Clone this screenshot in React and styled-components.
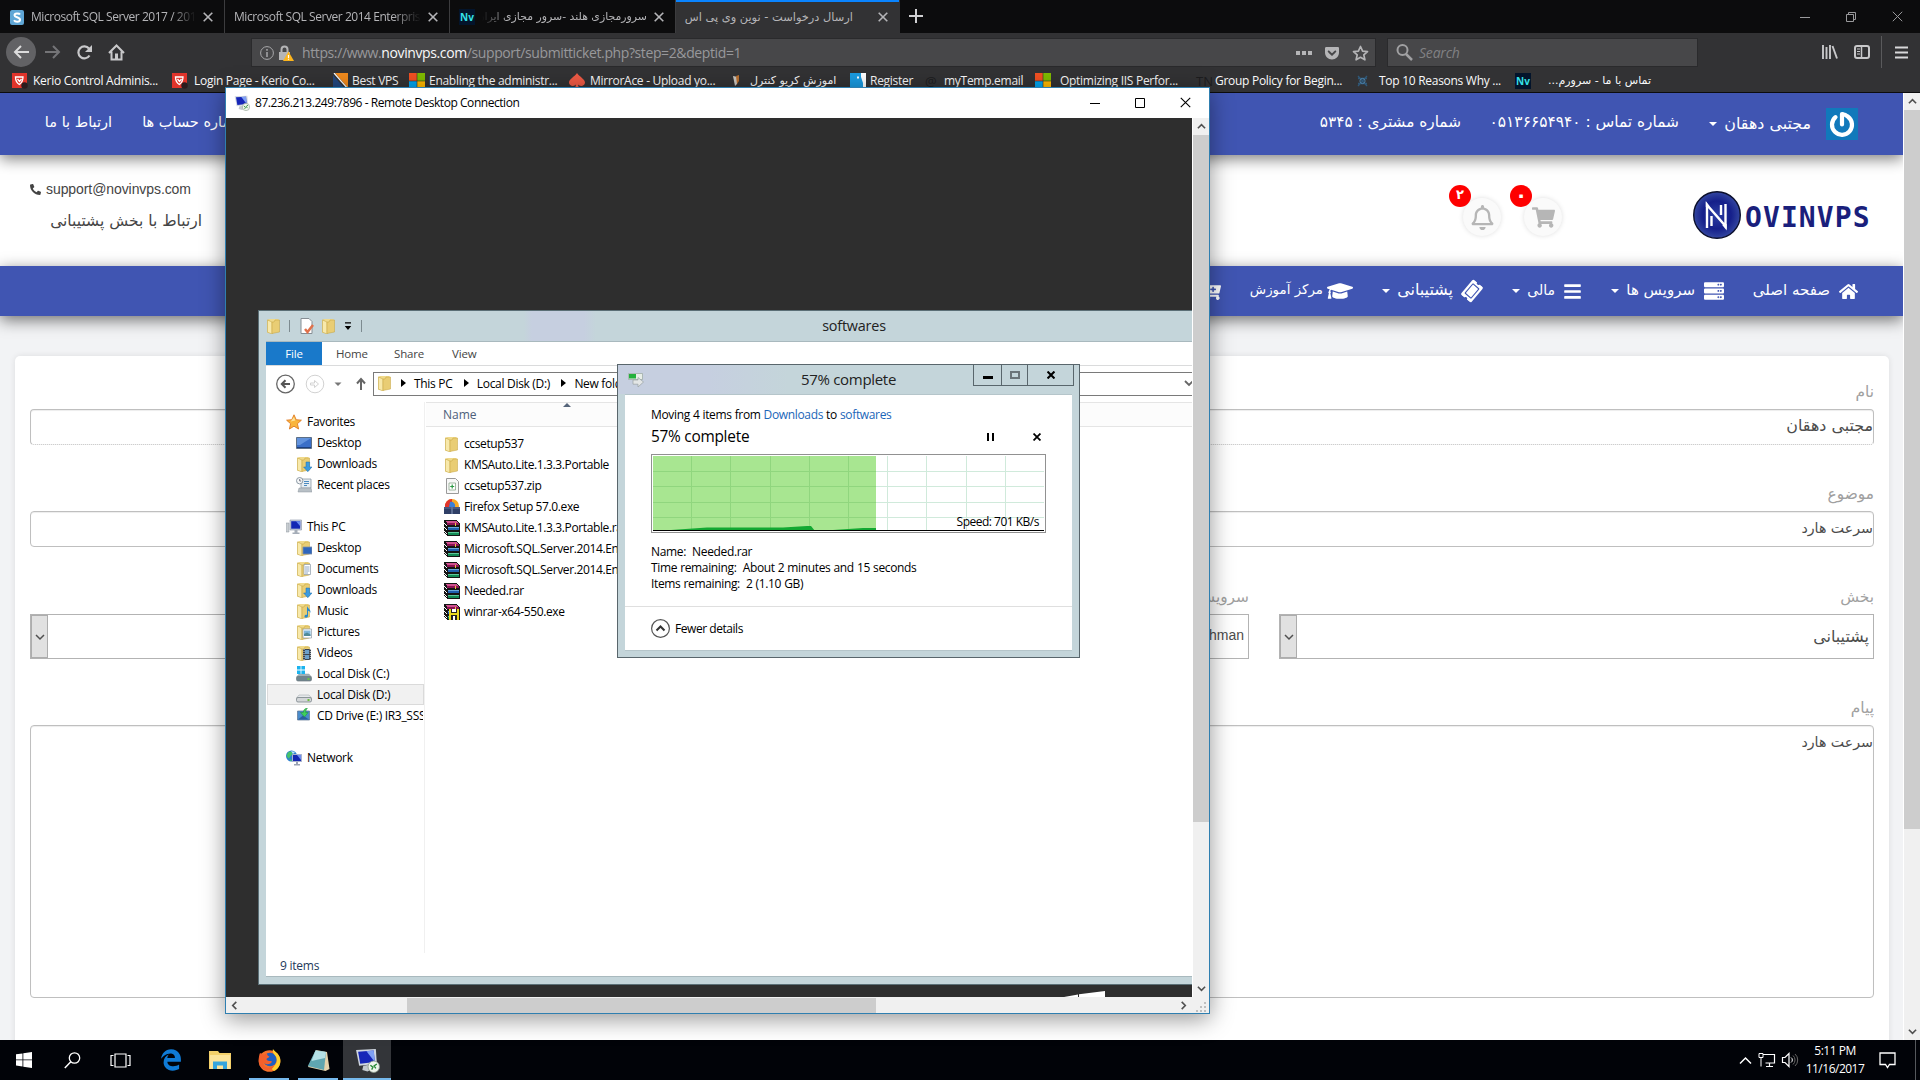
import styled, { createGlobalStyle, css } from "styled-components";
import {
  FaHome, FaServer, FaBars, FaTicketAlt, FaGraduationCap, FaCartPlus,
  FaPhone, FaShoppingCart, FaRegBell, FaGetPocket, FaEdgeLegacy,
} from "react-icons/fa";

const UI = `"Open Sans", "Noto Sans", "DejaVu Sans", sans-serif`;
const FA = `"DejaVu Sans", sans-serif`;

const GlobalStyle = createGlobalStyle`
  * { box-sizing: border-box; }
  body { margin: 0; background: #000; overflow: hidden; }
  svg { display: block; flex: none; }
`;

const Desktop = styled.div`
  width: 1920px;
  height: 1080px;
  position: relative;
  overflow: hidden;
  display: flex;
  flex-direction: column;
  font-family: ${UI};
  font-size: 12px;
  white-space: nowrap;
`;

/* ---------- browser chrome ---------- */

const Browser = styled.div`
  height: 1040px;
  display: flex;
  flex-direction: column;
`;

const TabStrip = styled.div`
  height: 33px;
  background: #0c0c0d;
  display: flex;
  align-items: stretch;
`;

const Tab = styled.div`
  width: ${p => p.$w}px;
  padding: 1px 11px 0 ${p => p.$pad || 10}px;
  display: flex;
  align-items: center;
  gap: 7px;
  color: #b5b5b8;
  border-right: 1px solid ${p => (p.$active ? "transparent" : "#3c3c3e")};
  ${p => p.$active && css`
    background: #323234;
    box-shadow: inset 0 2px #0a84ff;
  `}
`;

const TabLabel = styled.div`
  flex: 1;
  overflow: hidden;
  direction: ${p => (p.$rtl ? "rtl" : "ltr")};
  font-family: ${p => (p.$rtl ? FA : UI)};
  font-size: ${p => p.$size || 12}px;
  letter-spacing: ${p => (p.$rtl ? 0 : -0.45)}px;
  line-height: 20px;
  padding-right: ${p => p.$end || 0}px;
  mask-image: ${p => p.$fade === "left"
    ? "linear-gradient(to left, #000 85%, transparent)"
    : p.$fade === "right" ? "linear-gradient(to right, #000 85%, transparent)" : "none"};
`;

const WindowButtons = styled.div`
  margin-left: auto;
  display: flex;
  align-items: center;
  gap: 34px;
  padding-right: 17px;
`;

const Toolbar = styled.div`
  height: 38px;
  background: #323234;
  display: flex;
  align-items: center;
  padding-left: 6px;
`;

const BackButton = styled.div`
  width: 30px;
  height: 30px;
  border-radius: 50%;
  background: #626265;
  display: flex;
  align-items: center;
  justify-content: center;
`;

const NavIcons = styled.div`
  display: flex;
  align-items: center;
  gap: 15px;
  padding-left: 9px;
  width: 215px;
`;

const UrlBar = styled.div`
  width: 1125px;
  height: 29px;
  background: #474749;
  border: 1px solid #2a2a2c;
  display: flex;
  align-items: center;
  padding: 1px 6px 0 8px;
  color: #98989b;
  font-size: 14px;
  letter-spacing: -0.39px;

  b { color: #f9f9fa; font-weight: 400; }
`;

const LockIcon = styled.svg`
  margin-left: 5px;
`;

const UrlText = styled.div`
  margin-left: 8px;
  flex: 1;
`;

const UrlActions = styled.div`
  display: flex;
  align-items: center;
  gap: 12px;
`;

const SearchBar = styled(UrlBar)`
  width: 311px;
  margin-left: 11px;
  color: #818184;
  font-style: italic;
  letter-spacing: -0.2px;
  gap: 6px;
`;

const ToolbarEnd = styled.div`
  margin-left: auto;
  display: flex;
  align-items: center;
  height: 100%;
  padding-right: 12px;
`;

const Divider = styled.div`
  width: 1px;
  height: 32px;
  background: #5a5a5c;
  margin: 0 13px 0 11px;
`;

const Bookmarks = styled.div`
  height: 22px;
  background: #323234;
  border-bottom: 1px solid #0c0c0d;
  padding: 0 0 1px 12px;
  display: flex;
  align-items: center;
  color: #f9f9fa;
`;

const Bookmark = styled.div`
  width: ${p => p.$w}px;
  display: flex;
  align-items: center;
  gap: 5px;

  span {
    font-family: ${p => (p.$rtl ? FA : UI)};
    font-size: ${p => (p.$rtl ? 11 : 12)}px;
    letter-spacing: ${p => (p.$rtl ? 0 : -0.28)}px;
    direction: ${p => (p.$rtl ? "rtl" : "ltr")};
    margin-left: ${p => p.$indent || 0}px;
    line-height: 18px;
  }
`;

const NvBadge = styled.div`
  width: 16px;
  height: 16px;
  background: #03142b;
  color: #35e0e8;
  font: bold 10px/16px ${UI};
  text-align: center;
`;

const FaintGlyph = styled.div`
  width: 16px;
  color: #1d1d1f;
  font-size: 13px;
  line-height: 16px;
`;

/* ---------- web page ---------- */

const Viewport = styled.div`
  height: 947px;
  display: flex;
`;

const Page = styled.div`
  width: 1903px;
  background: #f2f3f5;
  font-family: ${FA};
  direction: rtl;
  color: #444;
  overflow: hidden;
`;

const TopBar = styled.div`
  height: 62px;
  background: #4055b2;
  color: #fff;
  display: flex;
  align-items: center;
  padding: 0 45px;
  position: relative;
  z-index: 2;
  box-shadow: 0 4px 14px rgba(0, 0, 0, 0.5);
`;

const TopText = styled.div`
  width: ${p => p.$w}px;
  font-size: ${p => p.$size}px;
  line-height: 24px;
  padding-bottom: ${p => p.$lift || 0}px;
  margin-right: ${p => (p.$gap === "auto" ? "auto" : p.$gap + "px")};
`;

const Caret = styled.span`
  border: 4px solid transparent;
  border-top-color: currentColor;
  border-bottom: 0;
  margin-right: 7px;
`;

const Masthead = styled.div`
  height: 111px;
  background: #fff;
  padding: 0 33px 0 30px;
  display: flex;
  align-items: flex-start;
`;

const Logo = styled.div`
  direction: ltr;
  display: flex;
  align-items: center;
  gap: 4px;
  margin-top: 36px;
  width: 177px;
  font: bold 28px/42px "DejaVu Sans Mono", monospace;
  letter-spacing: 1.1px;
  color: #1a1f7c;

  span { padding-top: 6px; }
`;

const RoundButton = styled.div`
  position: relative;
  width: 38px;
  height: 38px;
  border-radius: 50%;
  margin: 43px ${p => p.$gap}px 0 0;
  background: #fafafa;
  box-shadow: 0 0 5px rgba(0, 0, 0, 0.13);
  color: #b6b6b6;
  display: flex;
  align-items: center;
  justify-content: center;
`;

const CountBadge = styled.div`
  position: absolute;
  left: -14px;
  top: -13px;
  width: 22px;
  height: 22px;
  border-radius: 50%;
  background: #fe0000;
  color: #fff;
  font-weight: bold;
  font-size: ${p => p.$size || 13}px;
  line-height: 20px;
  text-align: center;
`;

const Contact = styled.div`
  margin: 24px auto 0 0;
  width: 172px;
`;

const Mail = styled.div`
  direction: ltr;
  display: flex;
  align-items: center;
  gap: 5px;
  font: 14px/20px "Liberation Sans", sans-serif;
  letter-spacing: -0.08px;
`;

const ContactNote = styled.div`
  font-size: 15.5px;
  line-height: 24px;
  margin-top: 10px;
`;

const MainNav = styled.div`
  height: 50px;
  background: #4055b2;
  color: #fff;
  display: flex;
  align-items: center;
  padding-right: 45px;
  position: relative;
  z-index: 2;
  box-shadow: 0 4px 16px rgba(0, 0, 0, 0.55);
`;

const NavItem = styled.div`
  width: ${p => p.$w}px;
  flex: none;
  display: flex;
  align-items: center;
  font-size: ${p => p.$size || 15}px;

  span:first-of-type { margin-right: ${p => p.$gap}px; line-height: 24px; padding-bottom: 2px; }
`;

const Card = styled.div`
  margin: 40px 14px 0 15px;
  height: 700px;
  background: #fff;
  border-radius: 5px;
  box-shadow: 0 0 6px rgba(0, 0, 0, 0.09);
  padding: 27px 15px 0;
`;

const Field = styled.div`
  width: ${p => (p.$w ? p.$w + "px" : "auto")};
  margin-bottom: ${p => p.$after}px;
`;

const Label = styled.div`
  height: 26px;
  line-height: 19px;
  font-size: 15.4px;
  color: #a0a0a0;
`;

const Input = styled.div`
  height: ${p => p.$h || 36}px;
  border: 1px solid #bfbfbf;
  border-bottom-style: ${p => (p.$dotted ? "dotted" : "solid")};
  border-radius: 4px;
  box-shadow: inset 0 1px 1px rgba(0, 0, 0, 0.075);
  font-size: ${p => p.$size || 14.2}px;
  line-height: ${p => (p.$dotted ? 31 : 33)}px;
  color: #4c4c4c;
`;

const FieldRow = styled.div`
  display: flex;
  gap: 30px;
`;

const Select = styled.div`
  height: 45px;
  border: 1px solid #b3b3b3;
  display: flex;
  justify-content: space-between;
  align-items: center;
  padding-right: 4px;
  font-size: 16px;
  line-height: 40px;
  color: #4c4c4c;

  i { font: 14px/41px "Liberation Sans", sans-serif; direction: ltr; align-self: flex-start; }
`;

const SelectArrow = styled.div`
  width: 17px;
  height: 43px;
  background: #e1e1e1;
  border: 1px solid #adadad;
  display: flex;
  align-items: center;
  justify-content: center;
`;

/* ---------- scrollbars ---------- */

const VScroll = styled.div`
  width: ${p => p.$w}px;
  background: #f0f0f0;
  display: flex;
  flex-direction: column;
  align-items: center;
  border-left: 1px solid #fff;
`;

const HScroll = styled.div`
  height: 16px;
  background: #f0f0f0;
  display: flex;
  align-items: center;
`;

const ScrollArrow = styled.div`
  width: 17px;
  height: 17px;
  display: flex;
  align-items: center;
  justify-content: center;
`;

const VThumb = styled.div`
  width: 100%;
  height: ${p => p.$len}px;
  background: #cdcdcd;
  margin-bottom: auto;
`;

const HThumb = styled.div`
  width: 469px;
  height: 15px;
  background: #cdcdcd;
  margin: 0 auto 0 164px;
`;

/* ---------- remote desktop window ---------- */

const RemoteWindow = styled.div`
  position: absolute;
  z-index: 5;
  left: 225px;
  top: 87px;
  width: 985px;
  height: 927px;
  border: 1px solid #2f7fb0;
  background: #fff;
  box-shadow: 0 5px 22px rgba(0, 0, 0, 0.42);
  display: flex;
  flex-direction: column;
  color: #000;
`;

const RemoteTitle = styled.div`
  height: 30px;
  display: flex;
  align-items: center;
  padding: 0 18px 1px 8px;
  gap: 5px;
  letter-spacing: -0.45px;
`;

const RemoteButtons = styled.div`
  margin-left: auto;
  display: flex;
  align-items: center;
  gap: 35px;
`;

const RemoteBody = styled.div`
  display: flex;
  height: 879px;
`;

const RemoteScreen = styled.div`
  position: relative;
  width: 966px;
  background: #2e2e2e;
  overflow: hidden;
`;

const WallpaperMark = styled.svg`
  position: absolute;
  left: 838px;
  bottom: 0;
`;

const Explorer = styled.div`
  position: absolute;
  left: 32px;
  top: 192px;
  width: 1192px;
  height: 675px;
  background: #c4d5da;
  border: 1px solid #5b6f76;
  padding: 0 7px 7px;
  display: flex;
  flex-direction: column;
`;

const ExplorerTitle = styled.div`
  height: 30px;
  display: flex;
  align-items: center;
  position: relative;
  margin-right: -7px;
  background: linear-gradient(to right, #c4d5da 258px, #c6cfe0 266px, #c6cfe0 318px, #c4d5da 330px);
`;

const QuickActions = styled.div`
  display: flex;
  align-items: center;
  gap: 7px;
  margin-left: 3px;
`;

const TitleText = styled.div`
  position: absolute;
  inset: 0 7px 0 0;
  line-height: 29px;
  text-align: center;
  font-size: 14.4px;
  letter-spacing: -0.2px;
  color: #222;
`;

const Bar = styled.div`
  width: 1px;
  height: 12px;
  background: #7d8b90;
  margin: 0 ${p => p.$m}px;
`;

const ExplorerBody = styled.div`
  flex: 1;
  background: #fff;
  border-top: 1px solid #a9b9be;
  border-bottom: 1px solid #a9b9be;
  display: flex;
  flex-direction: column;
`;

const Ribbon = styled.div`
  height: 24px;
  display: flex;
  border-bottom: 1px solid #dadbdc;
  color: #444;
  line-height: 24px;
  font-size: 11.5px;
  letter-spacing: -0.15px;
`;

const FileTab = styled.div`
  width: 56px;
  background: #1979ca;
  color: #fff;
  text-align: center;
  line-height: 23px;
`;

const RibbonTab = styled.div`
  width: 58px;
  padding-left: 14px;
`;

const AddressRow = styled.div`
  height: 36px;
  display: flex;
  align-items: center;
  padding: 0 0 1px 10px;
`;

const NavArrows = styled.div`
  width: 97px;
`;

const AddressBox = styled.div`
  width: 828px;
  height: 24px;
  border: 1px solid #7a7a7a;
  display: flex;
  align-items: center;
  padding: 0 6px 1px 3px;
  letter-spacing: -0.3px;
`;

const Crumb = styled.div`
  width: ${p => p.$w}px;
  display: flex;
  align-items: center;

  &::before {
    content: "";
    border: 4px solid transparent;
    border-left: 5px solid #000;
    border-right: 0;
    margin: 0 8px 0 8px;
  }
`;

const AddressDrop = styled.svg`
  margin-left: 533px;
`;

const Panes = styled.div`
  height: 551px;
  display: flex;
`;

const Tree = styled.div`
  width: 159px;
  padding-top: 9px;
  border-right: 1px solid #f0f0f0;
`;

const TreeRow = styled.div`
  height: 21px;
  width: 157px;
  margin-left: 1px;
  padding-left: ${p => (p.$top ? 18 : 28)}px;
  margin-top: ${p => (p.$gap ? 21 : 0)}px;
  display: flex;
  align-items: center;
  gap: 5px;
  overflow: hidden;
  letter-spacing: -0.3px;
  border: 1px solid ${p => (p.$selected ? "#dadada" : "transparent")};
  background: ${p => (p.$selected ? "#f1f1f1" : "transparent")};
`;

const FileList = styled.div`
  flex: 1;
  margin-left: 1px;
`;

const ListHeader = styled.div`
  height: 25px;
  margin-bottom: 6px;
  border-top: 1px solid #e5e5e5;
  border-bottom: 1px solid #e5e5e5;
  background: #fcfcfc;
  color: #4c607a;
  line-height: 24px;
  padding-left: 17px;
  position: relative;

  &::after {
    content: "";
    position: absolute;
    left: 137px;
    top: 0;
    border: 4px solid transparent;
    border-top: 0;
    border-bottom-color: #56657a;
  }
`;

const FileRow = styled.div`
  height: 21px;
  padding-left: 18px;
  display: flex;
  align-items: center;
  gap: 4px;
  letter-spacing: -0.38px;
`;

const StatusBar = styled.div`
  flex: 1;
  padding: 3px 0 0 14px;
  line-height: 20px;
  color: #1e395b;
  letter-spacing: -0.25px;
`;

/* ---------- copy dialog ---------- */

const Dialog = styled.div`
  position: absolute;
  left: 391px;
  top: 246px;
  width: 463px;
  height: 294px;
  border: 1px solid #59666c;
  background: #c4d5da;
  padding: 0 7px 7px;
`;

const DialogTitle = styled.div`
  height: 29px;
  margin: 0 -7px;
  padding-left: 10px;
  display: flex;
  align-items: center;
  position: relative;
  background: linear-gradient(to right, #c6cfe0 90px, #c4d5da 170px);
`;

const DialogTitleText = styled(TitleText)`
  inset: 0;
  font-size: 15px;
  line-height: 28px;
  letter-spacing: -0.3px;
`;

const DialogButtons = styled.div`
  position: absolute;
  right: 5px;
  top: -1px;
  height: 22px;
  border: 1px solid #59666c;
  display: grid;
  grid-template-columns: 28px 26px 45px;
`;

const DialogButton = styled.div`
  display: flex;
  align-items: center;
  justify-content: center;
  border-right: ${p => (p.$last ? 0 : 1)}px solid #59666c;
`;

const DialogBody = styled.div`
  height: 257px;
  background: #fff;
  border: 1px solid #b5c5ca;
  border-width: 1px 0;
  padding-top: 11px;
`;

const DialogLine = styled.div`
  height: ${p => p.$h}px;
  line-height: ${p => p.$h}px;
  padding-left: 26px;
  letter-spacing: -0.35px;
  word-spacing: 0.3px;

  a { color: #1b66b8; }
`;

const ProgressRow = styled.div`
  height: 24px;
  padding: 0 31px 0 26px;
  display: flex;
  align-items: center;
  font-size: 15.4px;
  letter-spacing: -0.25px;

  svg:first-of-type { margin: 2px 39px 0 auto; }
  svg:last-of-type { margin-top: 2px; }
`;

const ChartBox = styled.div`
  position: relative;
  width: 395px;
  height: 79px;
  margin: 6px 0 11px 26px;
  border: 1px solid #919191;
  padding: 1px;
`;

const Speed = styled.div`
  position: absolute;
  right: 6px;
  bottom: 1px;
  line-height: 18px;
  letter-spacing: -0.5px;
`;

const Details = styled.div`
  margin-top: 14px;
  border-top: 1px solid #dfdfdf;
  height: 44px;
  padding-left: 26px;
  display: flex;
  align-items: center;
  gap: 5px;
  letter-spacing: -0.45px;
`;

/* ---------- taskbar ---------- */

const TaskbarRow = styled.div`
  height: 40px;
  background: #010308;
  color: #fff;
  display: flex;
  align-items: center;
`;

const TaskButton = styled.div`
  width: 48px;
  height: 40px;
  margin-left: ${p => p.$gap || 0}px;
  display: flex;
  align-items: center;
  justify-content: center;
  background: ${p => (p.$active ? "#333539" : "transparent")};
  background-image: ${p => (p.$open ? "linear-gradient(#76b9ed, #76b9ed)" : "none")};
  background-repeat: no-repeat;
  background-position: center bottom;
  background-size: ${p => (p.$active ? 48 : 40)}px 2px;
`;

const Tray = styled.div`
  margin-left: auto;
  height: 40px;
  display: flex;
  align-items: center;
`;

const Clock = styled.div`
  width: 66px;
  margin: 0 11px 0 2px;
  text-align: center;
  line-height: 18px;
  font-size: 12px;
  letter-spacing: -0.5px;
`;

const ShowDesktop = styled.div`
  width: 5px;
  height: 40px;
  border-left: 1px solid #55585c;
  margin-left: 19px;
`;

/* ---------- icons ---------- */

const Cross = ({ s = 10, c = "#b5b5b8", w = 1.6 }) => (
  <svg width={s} height={s} viewBox="0 0 10 10"><path d="M.7.7l8.6 8.6M9.3.7L.7 9.3" stroke={c} strokeWidth={w} /></svg>
);

const Chevron = ({ rot = 0, c = "#505050", s = 9, w = 1.8 }) => (
  <svg width={s} height={s} viewBox="0 0 10 10" transform={`rotate(${rot})`}>
    <path d="M1 7l4-4 4 4" fill="none" stroke={c} strokeWidth={w} />
  </svg>
);

const Folder = ({ children }) => (
  <svg width="16" height="16" viewBox="0 0 16 16">
    <path d="M1.5 1.5L7 1v13.5l-5.5.5z" fill="#e6cc72" />
    <path d="M3 1h9.5v12.5H7z" fill="#f0da8c" />
    <path d="M1.5 2L6 4v12l-4.5-1.800z" fill="#f8e9ab" stroke="#c9ab4a" strokeWidth=".6" />
    <path d="M6 4h2l1-2h4.500v12L6 15.500z" fill="#e9cd74" stroke="#c4a23c" strokeWidth=".5" />
    {children}
  </svg>
);

const DownArrow = () => <path d="M10 6h3.600v5H16l-4.200 4.700L7.600 11H10z" fill="#3b9be0" stroke="#1d6fae" strokeWidth=".5" />;

const Monitor = ({ s = 16 }) => (
  <svg width={s} height={s} viewBox="0 0 16 16">
    <path d="M0 4h3v9H0z" fill="#c9ced2" stroke="#8d969c" strokeWidth=".5" />
    <path d="M4 1h11.500v10H4z" fill="#c8cfdc" stroke="#8892a6" strokeWidth=".6" />
    <path d="M5.200 2.200h9v7.500h-9z" fill="#1327b4" />
    <path d="M10 2.200h4.200v5z" fill="#6a8cf0" />
    <path d="M8.500 11h3v2.500h2V15h-7v-1.500h2z" fill="#a5adb8" />
  </svg>
);

const RemoteIcon = ({ s = 16 }) => (
  <svg width={s} height={s} viewBox="0 0 24 24">
    <path d="M1 2l19-1 1 14-17 2z" fill="#cfd6e0" />
    <path d="M3 3.500l15-1 1 11-14 1.500z" fill="#1626b8" />
    <path d="M11 3l7-.5 1 11z" fill="#7fa0f4" />
    <path d="M8 17l6-1 3 4-5 2.500-5-1.500z" fill="#c3c9cf" />
    <circle cx="18" cy="18" r="5.500" fill="#eef4ec" stroke="#8a998a" strokeWidth=".8" />
    <path d="M14.800 16.500l2.400 2-1.200 2.300M21 15.300l-2.700 1.900 1.700 2.400" fill="none" stroke="#278a34" strokeWidth="1.300" />
  </svg>
);

const DesktopIcon = () => (
  <svg width="16" height="16" viewBox="0 0 16 16">
    <path d="M.5 2.500h15v11H.5z" fill="#3a6fc8" stroke="#5c6f86" />
    <path d="M1 3h14L4 10H1z" fill="#74a2e6" opacity=".7" />
    <path d="M1 12h14v1H1z" fill="#1c3f7e" />
  </svg>
);

const Rar = ({ exe }) => (
  <svg width="16" height="16" viewBox="0 0 16 16" shapeRendering="crispEdges">
    <path d="M0 0h12l4 3v13H3l-3-3z" fill="#151515" />
    <path d="M1 1h11l3 2H4z" fill="#d0508e" />
    <path d="M3 3h12v2H4zM3 4h12v1H3z" fill="#8c1252" />
    <path d="M4 7h11v1H4z" fill="#6aa8dc" /><path d="M4 8h11v2H4z" fill="#1f5fae" />
    <path d="M4 12h11v1H4z" fill="#5cc79a" /><path d="M4 13h11v2H4z" fill="#128a54" />
    <path d="M0 3l3 2v1L0 4zM0 7l3 2v1L0 8zM0 11l3 2v1l-3-2z" fill="#fff" />
    <path d="M11 3h1v3h-1z" fill="#e8c840" />
    {exe && <><path d="M5 5h10v11H5z" fill="#e8d820" /><path d="M7 5h6v4H7zM7 11h6v5H7z" fill="#222" /><path d="M8 5h4v3H8zM9 12h2v4H9z" fill="#fff" /></>}
  </svg>
);

const Zip = () => (
  <svg width="16" height="16" viewBox="0 0 16 16">
    <path d="M2.500 .5h9l3 3v12h-12z" fill="#f8f8f8" stroke="#9a9a9a" />
    <path d="M5 5h6.500v7H5z" fill="#fff" stroke="#8aa58a" strokeWidth=".8" />
    <path d="M8.200 6.500v4M6.200 8.500h4" stroke="#2c9a44" strokeWidth="1.200" />
  </svg>
);

const FirefoxSetup = () => (
  <svg width="16" height="16" viewBox="0 0 16 16">
    <circle cx="8" cy="7" r="7" fill="#f7a823" />
    <path d="M1 8a7 7 0 0 1 7-8v6L5 9z" fill="#e2352c" />
    <path d="M6 3a4 4 0 0 1 5 5H5z" fill="#3a7fd8" />
    <path d="M0 8h16v7H0z" fill="#2f3f66" />
    <path d="M0 8h16v2H0z" fill="#48587f" />
    <path d="M7 8h2v7H7z" fill="#5c6d92" />
  </svg>
);

const Star5 = () => (
  <svg width="16" height="16" viewBox="0 0 16 16">
    <path d="M8 .8l2.200 4.900 5.200.5-4 3.500 1.200 5.300L8 12.200 3.400 15l1.200-5.300-4-3.500 5.200-.5z" fill="#f9b53c" stroke="#e07a22" strokeWidth=".9" />
    <path d="M8 3l1.300 3.500-4.600 1z" fill="#fde39a" />
  </svg>
);

const Recent = () => (
  <svg width="16" height="16" viewBox="0 0 16 16">
    <path d="M5 2h10v9H5z" fill="#e6edf2" stroke="#8d9aa5" strokeWidth=".8" />
    <path d="M8 4.500h5M8 6.500h5M8 8.500h3" stroke="#4b8ac0" />
    <path d="M3 11h12l1 4H2z" fill="#b8c0c6" stroke="#8d969c" strokeWidth=".5" />
    <circle cx="3.700" cy="3.700" r="3.200" fill="#f5f7f8" stroke="#8d9aa5" />
    <path d="M3.700 2v2h1.500" stroke="#556" fill="none" strokeWidth=".8" />
  </svg>
);

const Disk = ({ win }) => (
  <svg width="16" height="16" viewBox="0 0 16 16">
    <path d="M3 8h10l2.500 3H.5z" fill={win ? "#9fb1b8" : "#e6e9eb"} stroke="#9aa2a7" strokeWidth=".5" />
    <rect x=".5" y="10.500" width="15" height="4.500" rx="1.500" fill={win ? "#6f858e" : "#d3d6d8"} stroke="#6f7a80" strokeWidth=".7" />
    <path d="M11.500 12h2v2h-2z" fill="#6fc043" />
    {win && <path d="M1 0h3.600v3.600H1zM5.400 0H9v3.600H5.400zM1 4.400h3.600V8H1zM5.400 4.400H9V8H5.400z" fill="#1bb3ee" />}
  </svg>
);

const CdDrive = () => (
  <svg width="16" height="16" viewBox="0 0 16 16">
    <path d="M1.500 3h12v9h-12z" fill="#4a8ccc" stroke="#5b7390" strokeWidth=".7" />
    <path d="M2 11.500l5-4 6 4z" fill="#2a5f9f" />
    <path d="M11.500 0c-3 .5-4 2-4.200 4.500H4.500L8.500 9l3.600-4.500H9.700c0-2 .6-3.200 1.800-4.500z" fill="#3fcf5b" stroke="#1e8f38" strokeWidth=".5" />
  </svg>
);

const NetworkIcon = () => (
  <svg width="16" height="16" viewBox="0 0 16 16">
    <circle cx="5.500" cy="6" r="5.500" fill="#2d7fd0" />
    <path d="M2 2.500c2-2 4-1 4.500.5S4 6 3.500 8 1 7 .5 5.500zM3 9l3 1-1 1.500z" fill="#45c26a" />
    <path d="M5 1l4 1-2 2z" fill="#bfe6f5" />
    <path d="M6.500 4.500h9v7h-9z" fill="#1528b2" stroke="#a9b2cc" />
    <path d="M11 5h4v5z" fill="#6f8ef0" />
    <path d="M10 12h2v2h2v1.500H8V14h2z" fill="#9aa3b3" />
  </svg>
);

const MsLogo = () => (
  <svg width="16" height="16" viewBox="0 0 16 16">
    <path d="M0 0h7.700v7.700H0z" fill="#f25022" /><path d="M8.300 0H16v7.700H8.300z" fill="#7fba00" />
    <path d="M0 8.300h7.700V16H0z" fill="#00a4ef" /><path d="M8.300 8.300H16V16H8.300z" fill="#ffb900" />
  </svg>
);

const Kerio = () => (
  <svg width="16" height="16" viewBox="0 0 16 16">
    <path d="M0 0h15v15H0z" fill="#e0342b" />
    <path d="M3.500 4h7.500c0 3.500-1.500 6-3.700 7.500C5 10 3.500 7.500 3.500 4zM5.500 6l2 2.500 2-2.500" fill="none" stroke="#fff" strokeWidth="1.300" />
    <circle cx="12.500" cy="12.500" r="3.200" fill="#2a1c1e" />
  </svg>
);

const BestVps = () => (
  <svg width="16" height="16" viewBox="0 0 16 16"><path d="M2 0h13v15z" fill="#f08a1d" /><path d="M0 2l12 14H0z" fill="#22477f" /><path d="M1 0l14 16" stroke="#fff" strokeWidth="1.200" /></svg>
);

const Spade = () => (
  <svg width="16" height="16" viewBox="0 0 16 16"><path d="M8 0c2 3.500 8 6 8 9.500S11 14 9 11.500L10 16H6l1-4.500C5 14 0 13 0 9.500S6 3.500 8 0z" fill="#ee5a45" /></svg>
);

const Torch = () => (
  <svg width="14" height="16" viewBox="0 0 14 16"><path d="M2 3l5 1-1 7-2 2z" fill="#c9c6c0" /><path d="M5 3l3-1v6l-2 3z" fill="#b96f2e" /></svg>
);

const RegisterIcon = () => (
  <svg width="16" height="16" viewBox="0 0 16 16"><path d="M0 0h16v16H0z" fill="#fff" /><path d="M0 0h11v4l2 6v6H0z" fill="#1a9ae0" /><path d="M7 3.500h2v2H7z" fill="#fff" /></svg>
);

const Gear = () => (
  <svg width="16" height="16" viewBox="0 0 16 16"><path d="M2 3l9 10M11 3L2 13M2 5.500h9M2 10.500h9" stroke="#2f5878" strokeWidth="1.300" /><circle cx="6.500" cy="8" r="2.600" fill="none" stroke="#4c7fa6" /></svg>
);

const Back = ({ c }) => (
  <svg width="16" height="14" viewBox="0 0 16 14"><path d="M8 1L2 7l6 6M2 7h14" fill="none" stroke={c} strokeWidth="2" /></svg>
);

const Gravatar = () => (
  <svg width="32" height="32" viewBox="0 0 32 32">
    <path d="M0 0h32v32H0z" fill="#1179bb" />
    <path d="M16 6v10.500M22 8.800A10 10 0 1 1 9.500 9.200" fill="none" stroke="#fff" strokeWidth="4.200" strokeLinecap="round" />
    <path d="M22 8.800A10 10 0 0 0 16 6" fill="none" stroke="#fff" strokeWidth="4" />
  </svg>
);

const LogoMark = () => (
  <svg width="48" height="48" viewBox="0 0 48 48">
    <defs><radialGradient id="lg"><stop offset="0" stopColor="#2c3fa4" /><stop offset=".6" stopColor="#151f8a" /><stop offset="1" stopColor="#3346a0" /></radialGradient></defs>
    <circle cx="24" cy="24" r="23.300" fill="url(#lg)" stroke="#0b0f2c" strokeWidth="1.400" />
    <path d="M14 37V14l18.500 21V13M18.500 35V25M28 24V14" fill="none" stroke="#fff" strokeWidth="2.400" />
    <path d="M12.800 16V10l4 5.500zM33.700 33v6.500l-4.500-5.500z" fill="#fff" />
  </svg>
);

const DropDown = () => <SelectArrow><Chevron rot={180} s={10} w={1.500} /></SelectArrow>;

const tree = [
  { label: "Favorites", icon: <Star5 />, top: true },
  { label: "Desktop", icon: <DesktopIcon /> },
  { label: "Downloads", icon: <Folder><DownArrow /></Folder> },
  { label: "Recent places", icon: <Recent /> },
  { label: "This PC", icon: <Monitor />, top: true, gap: true },
  { label: "Desktop", icon: <Folder><path d="M7 7h9v7H7z" fill="#2f66bc" stroke="#7d8da5" strokeWidth=".8" /></Folder> },
  { label: "Documents", icon: <Folder><path d="M8 3.500h6.500v10H8z" fill="#fff" stroke="#8b99a8" strokeWidth=".7" /><path d="M9 6h4.500M9 8h4.500M9 10h4.500M9 12h3" stroke="#7592b8" strokeWidth=".8" /></Folder> },
  { label: "Downloads", icon: <Folder><DownArrow /></Folder> },
  { label: "Music", icon: <Folder><path d="M11 3c.5 2.500 4 3 3.500 7-.5-1.500-1.500-2-2.500-2.200V13c-.5 2.500-4 2-3.500 0 .3-1.300 1.500-1.500 2.500-1.300z" fill="#2489d0" /></Folder> },
  { label: "Pictures", icon: <Folder><path d="M7 5h8.500v9H7z" fill="#fff" stroke="#8b99a8" strokeWidth=".7" /><path d="M8 6.500h6.500V12H8z" fill="#7db6dc" /><path d="M8 10l3-1.500 3.500 2V12H8z" fill="#4f8a9a" /></Folder> },
  { label: "Videos", icon: <Folder><path d="M7 4h8v11H7z" fill="#39434e" /><path d="M9 5h4v4H9zM9 10h4v4H9z" fill="#6ba0cc" /><path d="M8 4v11M14.300 4v11" stroke="#fff" strokeWidth=".8" strokeDasharray="1 1" /></Folder> },
  { label: "Local Disk (C:)", icon: <Disk win /> },
  { label: "Local Disk (D:)", icon: <Disk />, selected: true },
  { label: "CD Drive (E:) IR3_SSS_X64", icon: <CdDrive /> },
  { label: "Network", icon: <NetworkIcon />, top: true, gap: true },
];

const files = [
  ["ccsetup537", <Folder />],
  ["KMSAuto.Lite.1.3.3.Portable", <Folder />],
  ["ccsetup537.zip", <Zip />],
  ["Firefox Setup 57.0.exe", <FirefoxSetup />],
  ["KMSAuto.Lite.1.3.3.Portable.rar", <Rar />],
  ["Microsoft.SQL.Server.2014.Enterprise", <Rar />],
  ["Microsoft.SQL.Server.2014.Enterprise", <Rar />],
  ["Needed.rar", <Rar />],
  ["winrar-x64-550.exe", <Rar exe />],
];

const bookmarks = [
  { w: 160, icon: <Kerio />, label: "Kerio Control Adminis..." },
  { w: 161, icon: <Kerio />, label: "Login Page - Kerio Co...", indent: 1 },
  { w: 76, icon: <BestVps />, label: "Best VPS", indent: -2 },
  { w: 160, icon: <MsLogo />, label: "Enabling the administr...", indent: -1 },
  { w: 162, icon: <Spade />, label: "MirrorAce - Upload yo..." },
  { w: 119, icon: <Torch />, label: "اموزش کریو کنترل", rtl: true },
  { w: 75, icon: <RegisterIcon />, label: "Register", indent: -1 },
  { w: 110, icon: <FaintGlyph>@</FaintGlyph>, label: "myTemp.email", indent: -2 },
  { w: 161, icon: <MsLogo />, label: "Optimizing IIS Perfor...", indent: 4 },
  { w: 160, icon: <FaintGlyph>TN</FaintGlyph>, label: "Group Policy for Begin...", indent: -2 },
  { w: 159, icon: <Gear />, label: "Top 10 Reasons Why ...", indent: 2 },
  { w: 160, icon: <NvBadge>Nv</NvBadge>, label: "تماس با ما - سرورم...", rtl: true, indent: 12 },
];

function BrowserChrome() {
  return (
    <>
      <TabStrip>
        <Tab $w={225}>
          <svg width="14" height="15" viewBox="0 0 14 15"><rect width="14" height="15" rx="2" fill="#5fa6d6" /><path d="M10 4.500C9 3 4.500 3 4.500 5.300S10 7 10 9.700 5 12 4 10.200" fill="none" stroke="#fff" strokeWidth="2" /></svg>
          <TabLabel $fade="right">Microsoft SQL Server 2017 / 2014</TabLabel>
          <Cross />
        </Tab>
        <Tab $w={225} $pad={9}>
          <TabLabel $fade="right">Microsoft SQL Server 2014 Enterprise</TabLabel>
          <Cross />
        </Tab>
        <Tab $w={226} $pad={9}>
          <NvBadge>Nv</NvBadge>
          <TabLabel $rtl $fade="left" $size={10.9}>سرورمجازی هلند -سرور مجازی ایران</TabLabel>
          <Cross />
        </Tab>
        <Tab $w={224} $active $pad={8}>
          <TabLabel $rtl $end={18} $size={11.4}>ارسال درخواست - نوین وی پی اس</TabLabel>
          <Cross />
        </Tab>
        <svg width="34" height="33"><path d="M16 9v14M9 16h14" stroke="#d0d0d2" strokeWidth="2" /></svg>
        <WindowButtons>
          <svg width="12" height="12"><path d="M0 6.500h10" stroke="#9a9a9c" /></svg>
          <svg width="12" height="12"><path d="M.5 3.500h7v7h-7zM2.500 3V1.500h7v7H8" fill="none" stroke="#9a9a9c" /></svg>
          <Cross s={11} w={0.9} c="#9a9a9c" />
        </WindowButtons>
      </TabStrip>
      <Toolbar>
        <BackButton><Back c="#dcdcdd" /></BackButton>
        <NavIcons>
          <svg width="16" height="14" viewBox="0 0 16 14"><path d="M8 1l6 6-6 6M14 7H0" fill="none" stroke="#747477" strokeWidth="2" /></svg>
          <svg width="17" height="17" viewBox="0 0 17 17"><path d="M13.500 11.500A6 6 0 1 1 13 4.500" fill="none" stroke="#c8c8ca" strokeWidth="2.200" /><path d="M16 1v7H9z" fill="#c8c8ca" /></svg>
          <svg width="17" height="17" viewBox="0 0 17 17"><path d="M1 9l7.500-7.500L16 9M3.500 7.500v8h10v-8" fill="none" stroke="#c8c8ca" strokeWidth="2" /><path d="M7 9.500h3V16H7z" fill="#c8c8ca" /></svg>
        </NavIcons>
        <UrlBar>
          <svg width="14" height="14" viewBox="0 0 14 14"><circle cx="7" cy="7" r="6.400" fill="none" stroke="#a8a8aa" /><path d="M7 6v5M7 3v1.700" stroke="#a8a8aa" strokeWidth="1.500" /></svg>
          <LockIcon width="15" height="16" viewBox="0 0 15 16">
            <path d="M2.500 7V4.500a3 3 0 0 1 6 0V7" fill="none" stroke="#b5b5b7" strokeWidth="2" /><path d="M0 7h11v8H0z" fill="#b5b5b7" />
            <path d="M9.500 6.500L15 16H4z" fill="#fdb51c" /><path d="M9.500 10v3M9.500 13.800v1" stroke="#fff" strokeWidth="1.200" />
          </LockIcon>
          <UrlText>https://www.<b>novinvps.com</b>/support/submitticket.php?step=2&amp;deptid=1</UrlText>
          <UrlActions>
            <svg width="16" height="4"><path d="M0 0h4v4H0zM6 0h4v4H6zM12 0h4v4h-4z" fill="#b5b5b7" /></svg>
            <FaGetPocket size={16} color="#b5b5b7" />
            <svg width="17" height="16" viewBox="0 0 17 16"><path d="M8.500 1.500l2.100 4.600 4.900.5-3.700 3.300 1.100 4.900-4.400-2.500-4.400 2.500 1.100-4.900L1.500 6.600l4.900-.5z" fill="none" stroke="#b5b5b7" strokeWidth="1.700" strokeLinejoin="round" /></svg>
          </UrlActions>
        </UrlBar>
        <SearchBar>
          <svg width="17" height="17" viewBox="0 0 17 17"><circle cx="6.500" cy="6" r="5" fill="none" stroke="#a0a0a2" strokeWidth="2" /><path d="M10 10l6 6" stroke="#a0a0a2" strokeWidth="2.500" /></svg>
          Search
        </SearchBar>
        <ToolbarEnd>
          <svg width="16" height="14" viewBox="0 0 16 14"><path d="M1 0v14M4.500 2v12M8 0v14M10.500 1l4.500 12.500" stroke="#c8c8ca" strokeWidth="1.900" /></svg>
          <svg width="32" height="14" viewBox="0 0 32 14"><rect x="17" y="1" width="14" height="12" rx="2" fill="none" stroke="#c8c8ca" strokeWidth="2" /><path d="M23.500 1v12" stroke="#c8c8ca" strokeWidth="1.500" /><path d="M19 4h3M19 6.500h3M19 9h3" stroke="#c8c8ca" /></svg>
          <Divider />
          <svg width="13" height="13"><path d="M0 1.500h13M0 6.500h13M0 11.500h13" stroke="#d8d8da" strokeWidth="2" /></svg>
        </ToolbarEnd>
      </Toolbar>
      <Bookmarks>
        {bookmarks.map((b, i) => (
          <Bookmark key={i} $w={b.w} $rtl={b.rtl} $indent={b.indent}>{b.icon}<span>{b.label}</span></Bookmark>
        ))}
      </Bookmarks>
    </>
  );
}

function TicketPage() {
  return (
    <Page>
      <TopBar>
        <Gravatar />
        <TopText $gap={15} $w={87} $size={15.9}>مجتبی دهقان</TopText>
        <Caret />
        <TopText $gap={30} $w={188} $size={15.4} $lift={4}>شماره تماس : ۰۵۱۳۶۶۵۴۹۴۰</TopText>
        <TopText $gap={30} $w={150} $size={15.3} $lift={4}>شماره مشتری : ۵۳۴۵</TopText>
        <TopText $gap="auto" $w={101} $size={14.5} $lift={4}>شماره حساب ها</TopText>
        <TopText $gap={30} $w={67} $size={14.5} $lift={4}>ارتباط با ما</TopText>
      </TopBar>
      <Masthead>
        <Logo><LogoMark /><span>OVINVPS</span></Logo>
        <RoundButton $gap={131}>
          <FaShoppingCart size={23} />
          <CountBadge $size={20}>۰</CountBadge>
        </RoundButton>
        <RoundButton $gap={23}>
          <FaRegBell size={25} />
          <CountBadge>۲</CountBadge>
        </RoundButton>
        <Contact>
          <Mail><FaPhone size={11} transform="scale(-1 1)" />support@novinvps.com</Mail>
          <ContactNote>ارتباط با بخش پشتیبانی</ContactNote>
        </Contact>
      </Masthead>
      <MainNav>
        <NavItem $w={134} $gap={9} $size={15}><FaHome size={19} /><span>صفحه اصلی</span></NavItem>
        <NavItem $w={142} $gap={9}><FaServer size={20} /><span>سرویس ها</span><Caret /></NavItem>
        <NavItem $w={100} $gap={8} $size={14}><FaBars size={19} /><span>مالی</span><Caret /></NavItem>
        <NavItem $w={129} $gap={9} $size={16}><FaTicketAlt size={20} transform="rotate(-50)" /><span>پشتیبانی</span><Caret /></NavItem>
        <NavItem $w={132} $gap={4} $size={13.4}><FaGraduationCap size={26} /><span>مرکز آموزش</span></NavItem>
        <NavItem $w={100} $gap={4}><FaCartPlus size={19} /></NavItem>
      </MainNav>
      <Card>
        <Field $after={40}>
          <Label>نام</Label>
          <Input $dotted $size={15.9}>مجتبی دهقان</Input>
        </Field>
        <Field $after={41}>
          <Label>موضوع</Label>
          <Input>سرعت هارد</Input>
        </Field>
        <FieldRow>
          <Field $w={595} $after={40}>
            <Label>بخش</Label>
            <Select>پشتیبانی<DropDown /></Select>
          </Field>
          <Field $w={1219} $after={40}>
            <Label>سرویس مرتبط</Label>
            <Select><i>Windows VPS - hman</i><DropDown /></Select>
          </Field>
        </FieldRow>
        <Field $after={0}>
          <Label>پیام</Label>
          <Input $h={273}>سرعت هارد</Input>
        </Field>
      </Card>
    </Page>
  );
}

function CopyDialog() {
  return (
    <Dialog>
      <DialogTitle>
        <svg width="16" height="16" viewBox="0 0 16 16"><path d="M.5 1.500h14v6H.5z" fill="#e8efe8" stroke="#9aa8a0" strokeWidth=".7" /><path d="M1 2h7v4.500H1z" fill="#23b13c" /><path d="M5 8h5V5.500L15.500 10 10 15v-2.800H5z" fill="#e3e6e6" stroke="#98a0a2" strokeWidth=".7" /></svg>
        <DialogTitleText>57% complete</DialogTitleText>
        <DialogButtons>
          <DialogButton><svg width="10" height="10"><path d="M0 6h10v3H0z" /></svg></DialogButton>
          <DialogButton><svg width="10" height="8"><path d="M1 1h8v6H1z" fill="none" stroke="#6b7479" strokeWidth="2" /></svg></DialogButton>
          <DialogButton $last><Cross s={8} c="#000" w={2.600} /></DialogButton>
        </DialogButtons>
      </DialogTitle>
      <DialogBody>
        <DialogLine $h={18}>Moving 4 items from <a>Downloads</a> to <a>softwares</a></DialogLine>
        <ProgressRow>
          57% complete
          <svg width="7" height="8"><path d="M0 0h2v8H0zM5 0h2v8H5z" /></svg>
          <Cross s={8} c="#000" w={2.200} />
        </ProgressRow>
        <ChartBox>
          <svg width="391" height="75">
            <path d="M39 0v75M77.500 0v75M117.500 0v75M156.500 0v75M195.500 0v75M234.500 0v75M273.500 0v75M313.500 0v75M352.500 0v75M0 15.500h391M0 30.500h391M0 46.500h391M0 61.500h391" stroke="#d0eadb" />
            <path d="M0 0h223v75H0z" fill="#a8e691" />
            <path d="M38.500 0v75M77.500 0v75M117.500 0v75M156.500 0v75M195.500 0v75M0 15.500h223M0 30.500h223M0 46.500h223M0 61.500h223" stroke="#90d67e" />
            <path d="M18 75v-1l36-2.500h76l24-1.500h4l4 5zM180 75v-1l30-2h13v3z" fill="#13a832" />
            <path d="M0 74.500h391" stroke="#000" />
          </svg>
          <Speed>Speed: 701 KB/s</Speed>
        </ChartBox>
        <DialogLine $h={16}>Name:&nbsp; Needed.rar</DialogLine>
        <DialogLine $h={16}>Time remaining:&nbsp; About 2 minutes and 15 seconds</DialogLine>
        <DialogLine $h={16}>Items remaining:&nbsp; 2 (1.10 GB)</DialogLine>
        <Details>
          <svg width="19" height="19"><circle cx="9.500" cy="9.500" r="8.900" fill="none" stroke="#555" strokeWidth="1.200" /><path d="M5.500 11.500l4-4 4 4" fill="none" stroke="#333" strokeWidth="2" /></svg>
          Fewer details
        </Details>
      </DialogBody>
    </Dialog>
  );
}

function ExplorerWindow() {
  return (
    <Explorer>
      <ExplorerTitle>
        <Folder />
        <Bar $m={7} />
        <QuickActions>
          <svg width="14" height="16" viewBox="0 0 14 16"><path d="M1 .5h8l3 3v12H1z" fill="#fff" stroke="#868e94" /><path d="M5 11l2.500 3L13 7" fill="none" stroke="#e0714b" strokeWidth="2.500" /></svg>
          <Folder />
        </QuickActions>
        <svg width="23" height="8"><path d="M8 .8h6M9 4.500h4L11 7z" stroke="#000" strokeWidth="1.200" /></svg>
        <Bar $m={1} />
        <TitleText>softwares</TitleText>
      </ExplorerTitle>
      <ExplorerBody>
        <Ribbon>
          <FileTab>File</FileTab>
          <RibbonTab>Home</RibbonTab>
          <RibbonTab>Share</RibbonTab>
          <RibbonTab>View</RibbonTab>
        </Ribbon>
        <AddressRow>
          <NavArrows>
            <svg width="97" height="20" fill="none">
              <circle cx="9.500" cy="10" r="8.800" stroke="#666" strokeWidth="1.300" /><path d="M14 10H6M9.500 6.300L5.800 10l3.700 3.700" stroke="#555" strokeWidth="2" />
              <circle cx="39" cy="10" r="8.800" stroke="#d2d2d2" /><path d="M34.500 9h4V6.500l4 3.500-4 3.500V11h-4z" stroke="#d2d2d2" />
              <path d="M58.500 8.500h7L62 12z" fill="#777" />
              <path d="M85 16V6M81 9.500L85 5l4 4.500" stroke="#666" strokeWidth="2" />
            </svg>
          </NavArrows>
          <AddressBox>
            <Folder />
            <Crumb $w={63}>This PC</Crumb>
            <Crumb $w={98}>Local Disk (D:)</Crumb>
            <Crumb $w={98}>New folder</Crumb>
            <AddressDrop width="10" height="10" viewBox="0 0 10 10"><path d="M1 3l4 4 4-4" fill="none" stroke="#666" strokeWidth="1.800" /></AddressDrop>
          </AddressBox>
        </AddressRow>
        <Panes>
          <Tree>
            {tree.map((t, i) => (
              <TreeRow key={i} $top={t.top} $gap={t.gap} $selected={t.selected}>{t.icon}{t.label}</TreeRow>
            ))}
          </Tree>
          <FileList>
            <ListHeader>Name</ListHeader>
            {files.map(([name, icon], i) => <FileRow key={i}>{icon}{name}</FileRow>)}
          </FileList>
        </Panes>
        <StatusBar>9 items</StatusBar>
      </ExplorerBody>
    </Explorer>
  );
}

function RemoteDesktop() {
  return (
    <RemoteWindow>
      <RemoteTitle>
        <RemoteIcon />
        87.236.213.249:7896 - Remote Desktop Connection
        <RemoteButtons>
          <svg width="10" height="10"><path d="M0 5.500h10" stroke="#000" /></svg>
          <svg width="10" height="10"><path d="M.5 .5h9v9h-9z" fill="none" stroke="#000" /></svg>
          <Cross s={11} c="#000" w={1} />
        </RemoteButtons>
      </RemoteTitle>
      <RemoteBody>
        <RemoteScreen>
          <ExplorerWindow />
          <CopyDialog />
          <WallpaperMark width="42" height="6"><path d="M0 6l14-2.500V6zM15 6V3.200L41 0v6z" fill="#fff" /></WallpaperMark>
        </RemoteScreen>
        <VScroll $w={17}>
          <ScrollArrow><Chevron /></ScrollArrow>
          <VThumb $len={687} />
          <ScrollArrow><Chevron rot={180} /></ScrollArrow>
        </VScroll>
      </RemoteBody>
      <HScroll>
        <ScrollArrow><Chevron rot={-90} /></ScrollArrow>
        <HThumb />
        <ScrollArrow><Chevron rot={90} /></ScrollArrow>
        <svg width="17" height="16"><path d="M12 5h2v2h-2zM8 9h2v2H8zM12 9h2v2h-2zM4 13h2v2H4zM8 13h2v2H8zM12 13h2v2h-2z" fill="#bfbfbf" /></svg>
      </HScroll>
    </RemoteWindow>
  );
}

function Taskbar() {
  return (
    <TaskbarRow>
      <TaskButton>
        <svg width="16" height="16" viewBox="0 0 16 16"><path d="M0 2.300L6.500 1.400v6.100H0zM7.300 1.300L16 0v7.500H7.300zM0 8.300h6.500v6.200L0 13.600zM7.300 8.300H16V16l-8.700-1.300z" fill="#fff" /></svg>
      </TaskButton>
      <TaskButton>
        <svg width="17" height="17" viewBox="0 0 17 17"><circle cx="10.500" cy="6" r="5.200" fill="none" stroke="#fff" strokeWidth="1.300" /><path d="M6.800 9.800L.8 16" stroke="#fff" strokeWidth="1.500" /></svg>
      </TaskButton>
      <TaskButton>
        <svg width="21" height="15" viewBox="0 0 21 15"><path d="M5 1h11v13H5zM3.500 2.500H1v10h2.500M17.500 2.500H20v10h-2.500" fill="none" stroke="#fff" strokeWidth="1.200" /></svg>
      </TaskButton>
      <TaskButton $gap={3}><FaEdgeLegacy size={22} color="#0f7bd6" /></TaskButton>
      <TaskButton $gap={1}>
        <svg width="22" height="19" viewBox="0 0 22 19"><path d="M0 0h9l1.500 2H22v16H0z" fill="#f3d06a" /><path d="M1 4h20v14H1z" fill="#fce49a" /><path d="M4 18v-7.500h14V18h-4v-3.500H8V18z" fill="#35a5dd" /></svg>
      </TaskButton>
      <TaskButton $gap={1} $open>
        <svg width="23" height="23" viewBox="0 0 23 23">
          <circle cx="11.500" cy="12" r="10.800" fill="#f4702a" />
          <circle cx="12" cy="10.500" r="6.800" fill="#1f5fc0" />
          <path d="M15 0c1 2 5.500 4 7 9s-1 11-6 13c-4-2-1-4 1-6s2.500-6 .5-9c-1.500-2-3.500-3.500-2.500-7z" fill="#ffd02e" />
          <path d="M2 4c2 1 3 1.500 5 1.500L9 4c0 2 .5 3 2.500 3.500-1 1.500-3 1.500-3 3 1 2 4 1 5.500 2-1 3-6 4-8.500 1-1 5 5 7 11 3C13 24 2 22 .8 13 .5 10 1 6 2 4z" fill="#f2602c" />
        </svg>
      </TaskButton>
      <TaskButton $gap={1} $open>
        <svg width="23" height="23" viewBox="0 0 23 23"><path d="M9 1l11 2 2.500 17-4 2L1 18z" fill="#e4d2ac" /><path d="M8.500 1.500L19 3l-2 18L.8 17z" fill="#5fa5b0" /><path d="M8.500 1.500L19 3l-1 6L4.500 12z" fill="#b5e1e6" /></svg>
      </TaskButton>
      <TaskButton $gap={1} $open $active><RemoteIcon s={25} /></TaskButton>
      <Tray>
        <svg width="13" height="9" viewBox="0 0 13 9"><path d="M1 7.500L6.500 2 12 7.500" fill="none" stroke="#fff" strokeWidth="1.500" /></svg>
        <svg width="29" height="16" viewBox="3 0 29 16"><path d="M13 2.500h12.500v8.500h-9M17 14.500h7M20.500 11v3.500" fill="none" stroke="#fff" strokeWidth="1.200" /><path d="M10 1.500h4v4h-4zM12 5.500v9" fill="#010308" stroke="#fff" /></svg>
        <svg width="19" height="16" viewBox="0 0 19 16"><path d="M1.500 5.500h2.500l4-4v13l-4-4H1.500z" fill="none" stroke="#fff" strokeWidth="1.200" /><path d="M10 5.500a3 3 0 0 1 0 5" fill="none" stroke="#fff" /><path d="M12 3.500a6 6 0 0 1 0 9M14 2a8 8 0 0 1 0 12" fill="none" stroke="#666" /></svg>
        <Clock>5:11 PM<br />11/16/2017</Clock>
        <svg width="17" height="17" viewBox="0 0 17 17"><path d="M1 1h15v11.500H10.500L8.500 15.500l-2-3H1z" fill="none" stroke="#fff" strokeWidth="1.300" /></svg>
        <ShowDesktop />
      </Tray>
    </TaskbarRow>
  );
}

export default function App() {
  return (
    <Desktop>
      <GlobalStyle />
      <Browser>
        <BrowserChrome />
        <Viewport>
          <TicketPage />
          <VScroll $w={17}>
            <ScrollArrow><Chevron /></ScrollArrow>
            <VThumb $len={719} />
            <ScrollArrow><Chevron rot={180} /></ScrollArrow>
          </VScroll>
        </Viewport>
      </Browser>
      <RemoteDesktop />
      <Taskbar />
    </Desktop>
  );
}
